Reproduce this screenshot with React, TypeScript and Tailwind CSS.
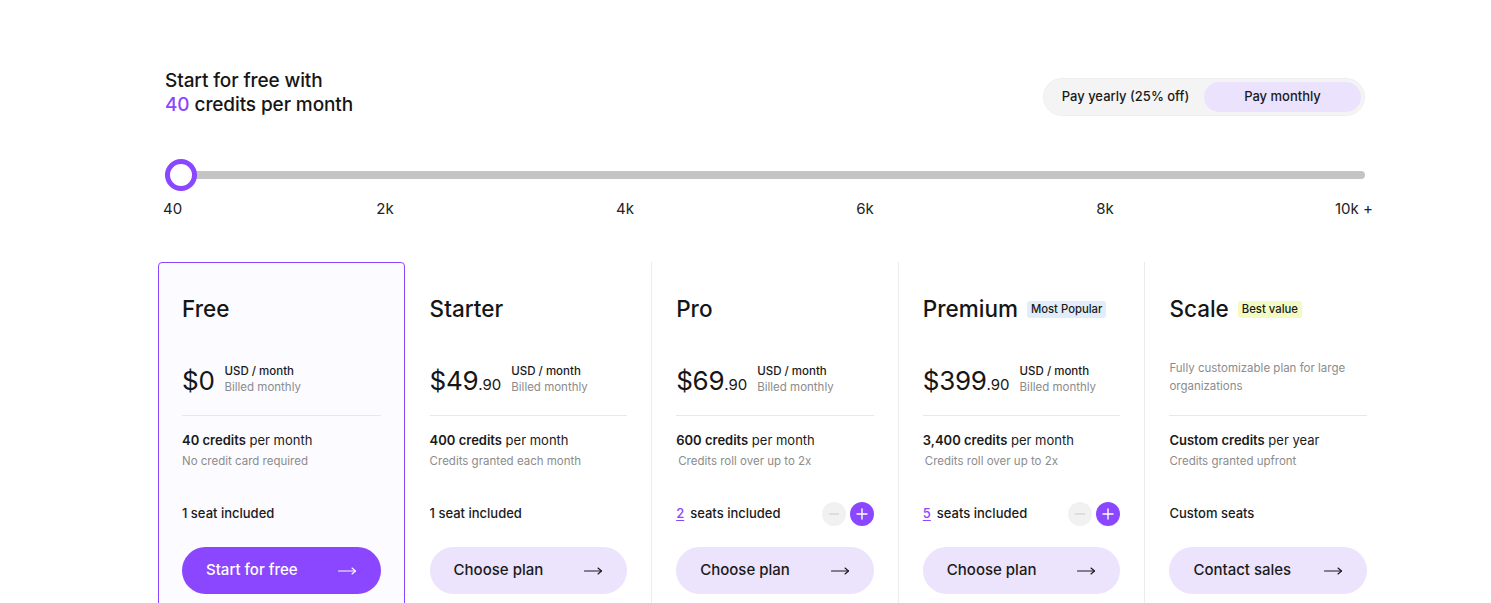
import React from "react";

type Plan = {
  name: string;
  badge?: { text: string; className: string };
  price?: string;
  cents?: string;
  description?: string;
  credits: string;
  creditsSuffix: string;
  creditsNote: string;
  seats?: number;
  seatsText: string;
  cta: string;
  primary?: boolean;
  noteIndent?: boolean;
};

const plans: Plan[] = [
  {
    name: "Free",
    price: "$0",
    credits: "40 credits",
    creditsSuffix: "per month",
    creditsNote: "No credit card required",
    seatsText: "1 seat included",
    cta: "Start for free",
    primary: true,
  },
  {
    name: "Starter",
    price: "$49",
    cents: ".90",
    credits: "400 credits",
    creditsSuffix: "per month",
    creditsNote: "Credits granted each month",
    seatsText: "1 seat included",
    cta: "Choose plan",
  },
  {
    name: "Pro",
    price: "$69",
    cents: ".90",
    credits: "600 credits",
    creditsSuffix: "per month",
    creditsNote: "Credits roll over up to 2x",
    seats: 2,
    seatsText: "seats included",
    cta: "Choose plan",
    noteIndent: true,
  },
  {
    name: "Premium",
    badge: { text: "Most Popular", className: "bg-[#e2edfb]" },
    price: "$399",
    cents: ".90",
    credits: "3,400 credits",
    creditsSuffix: "per month",
    creditsNote: "Credits roll over up to 2x",
    seats: 5,
    seatsText: "seats included",
    cta: "Choose plan",
    noteIndent: true,
  },
  {
    name: "Scale",
    badge: { text: "Best value", className: "bg-[#f3fbc2]" },
    description: "Fully customizable plan for large organizations",
    credits: "Custom credits",
    creditsSuffix: "per year",
    creditsNote: "Credits granted upfront",
    seatsText: "Custom seats",
    cta: "Contact sales",
  },
];

const Arrow = () => (
  <svg width="20" height="12" viewBox="0 0 20 12" fill="none" stroke="currentColor" strokeWidth="1.15" strokeLinecap="round" strokeLinejoin="round">
    <path d="M1.5 6h17" />
    <path d="M15 3l3.5 3-3.5 3" />
  </svg>
);

const PlanCard = ({ plan, index }: { plan: Plan; index: number }) => {
  const cardClass = plan.primary
    ? "border border-[#8b46ff] rounded-t-[4px] bg-[#fcfbff] pt-[32px] px-[23px]"
    : index >= 2
    ? "border-l border-[#ececec] pt-[33px] px-[24px]"
    : "pt-[33px] pl-[25px] pr-[24px]";

  return (
    <div className={`${cardClass} pb-[60px]`}>
      <div className="flex items-center h-[28px]">
        <h3 className="text-[22.5px] leading-[28px] font-medium text-[#161616]">{plan.name}</h3>
        {plan.badge && (
          <span className={`ml-[9px] px-[4px] h-[17px] leading-[17px] rounded-[3px] text-[11.3px] font-medium text-[#1a1a1a] ${plan.badge.className}`}>
            {plan.badge.text}
          </span>
        )}
      </div>

      <div className="mt-[42px] h-[32px] flex items-center">
        {plan.price ? (
          <>
            <div className="flex items-baseline text-[#161616]">
              <span className="text-[26px] leading-[32px] font-normal tracking-[-0.3px]">{plan.price}</span>
              {plan.cents && <span className="text-[15px] leading-[20px]">{plan.cents}</span>}
            </div>
            <div className="ml-[10px] pb-[4px]">
              <div className="text-[11.5px] leading-[16px] font-medium text-[#1a1a1a]">USD / month</div>
              <div className="text-[11.5px] leading-[16px] text-[#8c8c8c]">Billed monthly</div>
            </div>
          </>
        ) : (
          <p className="mb-[8px] text-[11.5px] leading-[18px] text-[#8c8c8c] max-w-[185px]">{plan.description}</p>
        )}
      </div>

      <div className="mt-[18px] h-px bg-[#e8e8ec]" />

      <div className="mt-[14px] text-[13px] leading-[20px] text-[#1a1a1a]">
        <span className="font-semibold">{plan.credits}</span> {plan.creditsSuffix}
      </div>
      <div className={`mt-[3px] text-[11.5px] leading-[16px] text-[#8c8c8c] ${plan.noteIndent ? "pl-[2px]" : ""}`}>
        {plan.creditsNote}
      </div>

      <div className="mt-[33px] h-[24px] flex items-center justify-between">
        <div className="text-[13px] font-medium text-[#1a1a1a]">
          {plan.seats !== undefined && (
            <span className="text-[#8b46ff] underline underline-offset-[2px] mr-[6px]">{plan.seats}</span>
          )}
          {plan.seatsText}
        </div>
        {plan.seats !== undefined && (
          <div className="flex gap-[4px]">
            <button className="w-[24px] h-[24px] rounded-full bg-[#f1f1f1] flex items-center justify-center">
              <svg width="12" height="12" viewBox="0 0 12 12" stroke="#d6d6d6" strokeWidth="1.3" strokeLinecap="round">
                <path d="M1.5 6h9" />
              </svg>
            </button>
            <button className="w-[24px] h-[24px] rounded-full bg-[#8b46ff] flex items-center justify-center">
              <svg width="12" height="12" viewBox="0 0 12 12" stroke="#ffffff" strokeWidth="1.4" strokeLinecap="round">
                <path d="M1 6h10M6 1v10" />
              </svg>
            </button>
          </div>
        )}
      </div>

      <button
        className={`mt-[21px] w-full h-[47px] rounded-full px-[24px] flex items-center justify-between text-[15px] font-medium ${
          plan.primary ? "bg-[#8b46ff] text-white" : "bg-[#ece3fd] text-[#1a1a1a]"
        }`}
      >
        <span>{plan.cta}</span>
        <Arrow />
      </button>
    </div>
  );
};

const App = () => {
  const ticks = ["2k", "4k", "6k", "8k"];

  return (
    <div className="min-h-screen bg-white overflow-hidden" style={{ fontFamily: "Inter, 'Noto Sans', sans-serif" }}>
      <div className="pl-[158px] pt-[69px]">
        <div className="ml-[7px] w-[1200px]">
          <div className="flex justify-between items-start">
            <h2 className="text-[19px] leading-[24px] font-medium text-[#161616] tracking-[-0.1px]">
              Start for free with
              <br />
              <span className="text-[#8b46ff]">40</span> credits per month
            </h2>
            <div className="mt-[9px] h-[38px] p-[3px] rounded-full bg-[#f4f4f4] border border-[#efefef] flex">
              <button className="w-[157px] h-[30px] rounded-full text-[13px] font-medium text-[#1a1a1a]">
                Pay yearly (25% off)
              </button>
              <button className="w-[157px] h-[30px] rounded-full bg-[#ebe3fd] text-[13px] font-medium text-[#1a1a1a]">
                Pay monthly
              </button>
            </div>
          </div>

          <div className="mt-[42px] relative h-[32px] flex items-center">
            <div className="w-full h-[8px] rounded-full bg-[#c4c4c4]" />
            <div className="absolute left-0 top-0 w-[32px] h-[32px] rounded-full border-[5px] border-[#8b46ff] bg-white" />
          </div>

          <div className="mt-[8px] flex text-[15px] leading-[20px] text-[#222]">
            <div className="w-[102px] shrink-0 -ml-[2px]">40</div>
            {ticks.map((t) => (
              <div key={t} className="w-[240px] shrink-0 text-center">
                {t}
              </div>
            ))}
            <div className="w-[240px] shrink-0 pl-[110px] whitespace-nowrap">10k +</div>
          </div>
        </div>

        <div className="mt-[43px] grid grid-cols-5 w-[1233px]">
          {plans.map((plan, i) => (
            <PlanCard key={plan.name} plan={plan} index={i} />
          ))}
        </div>
      </div>
    </div>
  );
};

export default App;
